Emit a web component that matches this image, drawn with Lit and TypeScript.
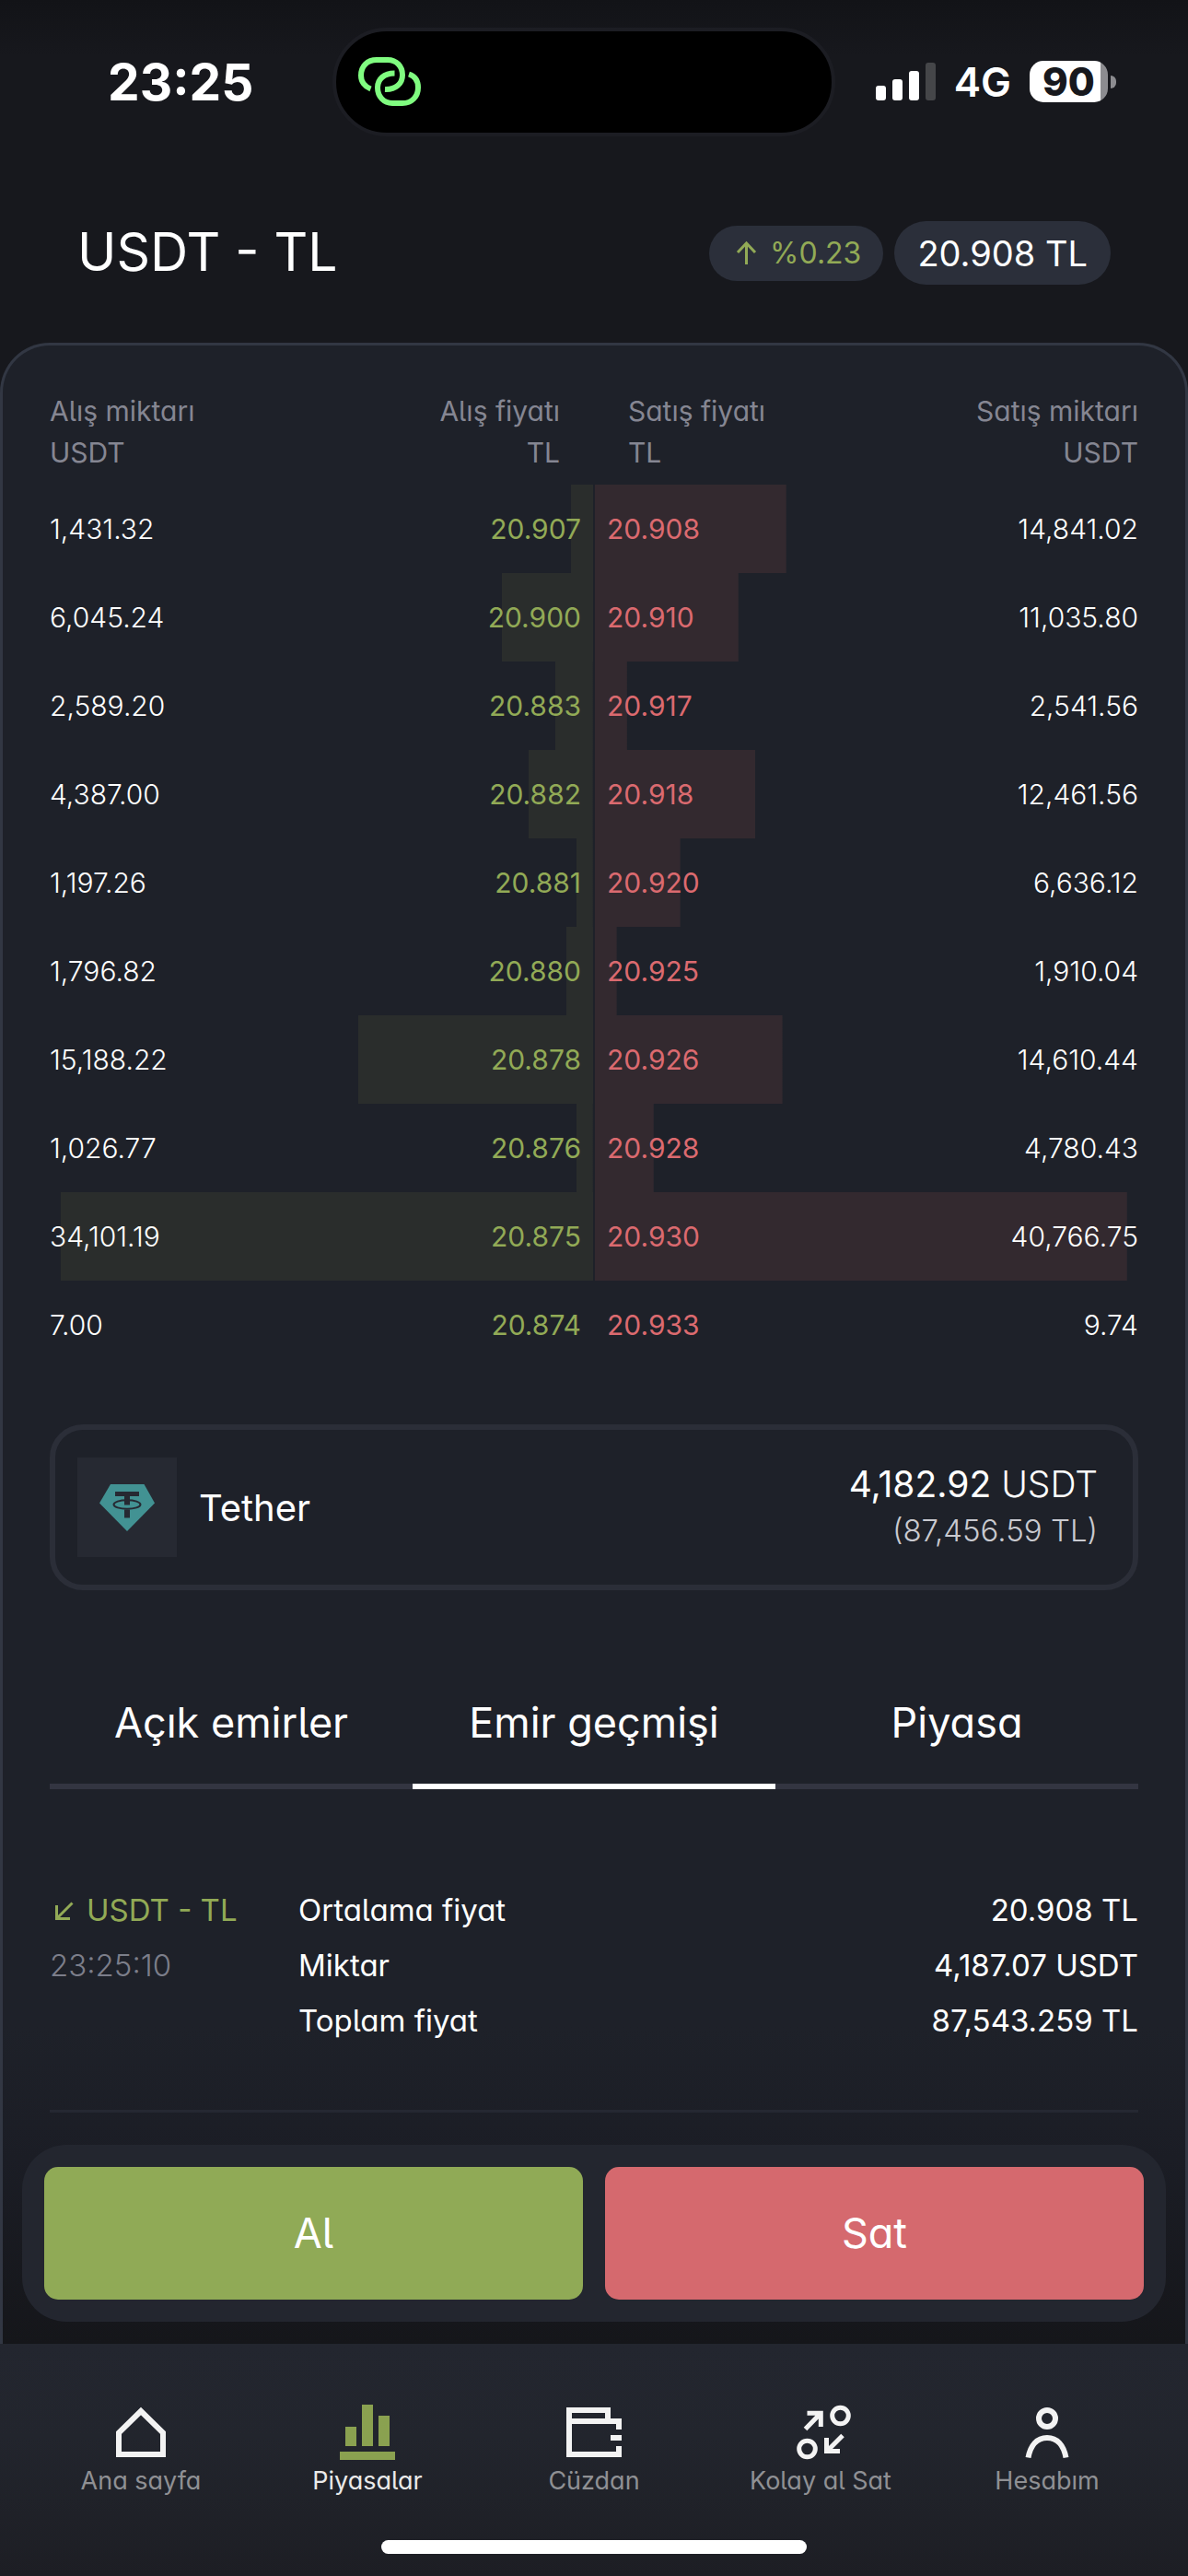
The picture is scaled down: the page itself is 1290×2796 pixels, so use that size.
import { LitElement, html, svg, css } from "lit";
import { customElement } from "lit/decorators.js";
import { classMap } from "lit/directives/class-map.js";

interface Level {
  amount: string;
  price: string;
  depth: number;
}

const bids: Level[] = [
  { amount: "1,431.32", price: "20.907", depth: 4.1 },
  { amount: "6,045.24", price: "20.900", depth: 16.8 },
  { amount: "2,589.20", price: "20.883", depth: 6.9 },
  { amount: "4,387.00", price: "20.882", depth: 11.8 },
  { amount: "1,197.26", price: "20.881", depth: 3 },
  { amount: "1,796.82", price: "20.880", depth: 4.9 },
  { amount: "15,188.22", price: "20.878", depth: 43.3 },
  { amount: "1,026.77", price: "20.876", depth: 3 },
  { amount: "34,101.19", price: "20.875", depth: 97.9 },
  { amount: "7.00", price: "20.874", depth: 0 },
];

const asks: Level[] = [
  { amount: "14,841.02", price: "20.908", depth: 35.2 },
  { amount: "11,035.80", price: "20.910", depth: 26.4 },
  { amount: "2,541.56", price: "20.917", depth: 5.9 },
  { amount: "12,461.56", price: "20.918", depth: 29.5 },
  { amount: "6,636.12", price: "20.920", depth: 15.7 },
  { amount: "1,910.04", price: "20.925", depth: 4 },
  { amount: "14,610.44", price: "20.926", depth: 34.5 },
  { amount: "4,780.43", price: "20.928", depth: 10.8 },
  { amount: "40,766.75", price: "20.930", depth: 98 },
  { amount: "9.74", price: "20.933", depth: 0 },
];

const tabs = ["Açık emirler", "Emir geçmişi", "Piyasa"];

const navItems = [
  {
    label: "Ana sayfa",
    icon: svg`<path d="M6 54V30.500L30 7L54 30.500V54Z" fill="none" stroke="#f3f3f3" stroke-width="6"/>`,
  },
  {
    label: "Piyasalar",
    icon: svg`<path d="M6 24h12v21H6zM24 0h12v45H24zM42 12h12v33H42zM0 51h60v9H0z" fill="#8aa150"/>`,
  },
  {
    label: "Cüzdan",
    icon: svg`<path d="M57 27V18H3M45 18V6H3V54H57V45M48 36H60" fill="none" stroke="#f3f3f3" stroke-width="6"/>`,
  },
  {
    label: "Kolay al Sat",
    icon: svg`<g fill="none" stroke="#f3f3f3" stroke-width="5"><circle cx="51.500" cy="12" r="8.800"/><circle cx="15.500" cy="48" r="8.800"/><path d="M13.500 26.500L30 9.500M15.500 9.200H30.300V24M54 33.500L37 50.500M36.500 36V50.500H51"/></g>`,
  },
  {
    label: "Hesabım",
    icon: svg`<g fill="none" stroke="#f3f3f3" stroke-width="6"><circle cx="30" cy="15" r="9"/><path d="M9.500 57.500C12 44 19 36 30 36S48 44 50.500 57.500"/></g>`,
  },
];

@customElement("order-book-side")
class OrderBookSide extends LitElement {
  static properties = {
    side: { type: String },
    levels: { attribute: false },
  };
  declare side: "bid" | "ask";
  declare levels: Level[];

  static styles = css`
    :host {
      display: block;
    }
    .book {
      width: 100%;
      border-collapse: collapse;
      font-size: 30px;
      line-height: 45px;
    }
    th,
    td {
      padding: 0;
      font-weight: 400;
      text-align: left;
    }
    th {
      padding-bottom: 12px;
      color: #858692;
    }
    td {
      height: 96px;
      color: #fff;
    }
    .end {
      text-align: right;
    }
    td.amount {
      font-weight: 300;
    }
    .level {
      background-repeat: no-repeat;
    }
    .bid .level {
      background-image: linear-gradient(#2a2d2c, #2a2d2c);
      background-position: right top;
    }
    .ask .level {
      background-image: linear-gradient(#33292f, #33292f);
      background-position: left top;
    }
    .bid th.price {
      padding-right: 36px;
    }
    .ask th.price {
      padding-left: 36px;
    }
    .bid td.price {
      padding-right: 13px;
      color: #92aa56;
    }
    .ask td.price {
      padding-left: 13px;
      color: #db6a6f;
    }
  `;

  render() {
    const bid = this.side === "bid";
    const amountClass = bid ? "amount" : "amount end";
    const priceClass = bid ? "price end" : "price";
    const amountHead = html`<th scope="col" class=${amountClass}>${bid ? "Alış" : "Satış"} miktarı<br />USDT</th>`;
    const priceHead = html`<th scope="col" class=${priceClass}>${bid ? "Alış" : "Satış"} fiyatı<br />TL</th>`;
    return html`
      <table class="book ${this.side}">
        <thead>
          <tr>${bid ? [amountHead, priceHead] : [priceHead, amountHead]}</tr>
        </thead>
        <tbody>
          ${this.levels.map((l) => {
            const amount = html`<td class=${amountClass}>${l.amount}</td>`;
            const price = html`<td class=${priceClass}>${l.price}</td>`;
            return html`<tr class="level" style="background-size: ${l.depth}% 100%">
              ${bid ? [amount, price] : [price, amount]}
            </tr>`;
          })}
        </tbody>
      </table>
    `;
  }
}

@customElement("app-root")
class AppRoot extends LitElement {
  static styles = css`
    :host {
      display: block;
      font-family: Inter, "Liberation Sans", sans-serif;
      font-feature-settings: "cv11", "cv05";
      color: #fff;
      background: #17181d;
    }
    * {
      box-sizing: border-box;
    }
    svg {
      display: block;
      overflow: visible;
      flex: none;
    }
    button {
      margin: 0;
      padding: 0;
      border: 0;
      background: none;
      color: inherit;
      font: inherit;
      font-feature-settings: inherit;
    }
    .screen {
      display: flex;
      flex-direction: column;
      min-height: 100vh;
      background: linear-gradient(#121317, #17181d 60px);
    }

    .status {
      display: grid;
      grid-template-columns: 361fr 546px 383fr;
      align-items: center;
      height: 177px;
      font-feature-settings: normal;
    }
    .time {
      padding-left: 117px;
      font-size: 55px;
      font-weight: 700;
    }
    .island {
      display: flex;
      align-items: center;
      height: 118px;
      padding-left: 24px;
      border: 4px solid #1c1d23;
      border-radius: 59px;
      background: #000;
    }
    .signals {
      display: flex;
      align-items: center;
      justify-content: flex-end;
      gap: 20px;
      padding-right: 78px;
      font-size: 44px;
      font-weight: 600;
    }
    .battery {
      display: flex;
      align-items: center;
      gap: 3px;
    }
    .charge {
      width: 85px;
      height: 45px;
      border-radius: 15px;
      background: linear-gradient(90deg, #fff 77px, #8c8c90 77px);
      color: #17181d;
      font-size: 42px;
      font-weight: 800;
      line-height: 45px;
      text-align: center;
    }
    .nub {
      width: 6px;
      height: 14px;
      border-radius: 0 6px 6px 0;
      background: #8c8c90;
    }

    .header {
      display: flex;
      align-items: center;
      gap: 12px;
      height: 195px;
      padding: 0 84px;
    }
    .pair {
      flex: 1;
      margin: 0;
      padding-bottom: 2px;
      font-size: 57px;
      font-weight: 400;
    }
    .pill {
      display: flex;
      align-items: center;
      justify-content: center;
      border-radius: 36px;
      background: #2b2f3a;
    }
    .change {
      gap: 15px;
      height: 60px;
      padding: 0 24px 0 30px;
      color: #92aa56;
      font-size: 32px;
    }
    .last {
      height: 69px;
      padding: 0 25px;
      font-size: 38px;
    }

    .panel {
      flex: 1;
      display: flex;
      flex-direction: column;
      padding: 49px 51px 24px;
      border: 3px solid #323743;
      border-bottom: 0;
      border-radius: 54px 54px 0 0;
      background: linear-gradient(#1e2129 calc(100% - 344px), #1b1d25 calc(100% - 200px), #15161a);
    }
    .books {
      display: grid;
      grid-template-columns: 1fr 1fr;
      gap: 2px;
    }

    .balance {
      display: flex;
      align-items: center;
      gap: 24px;
      height: 180px;
      margin-top: 60px;
      padding: 0 38px 0 24px;
      border: 6px solid #2b2e38;
      border-radius: 36px;
    }
    .coin {
      display: grid;
      place-items: center;
      width: 108px;
      height: 108px;
      background: #262932;
    }
    .coin-name {
      flex: 1;
      font-size: 40px;
      font-weight: 400;
      font-feature-settings: normal;
    }
    .holding {
      text-align: right;
      font-size: 39px;
      font-weight: 300;
      line-height: 51px;
    }
    .holding b {
      font-weight: 400;
    }
    .worth {
      color: #c9cad0;
      font-size: 33px;
    }

    .tabs {
      display: grid;
      grid-template-columns: repeat(3, 1fr);
      margin-top: 78px;
    }
    .tab {
      height: 138px;
      padding-bottom: 2px;
      border-bottom: 6px solid #333541;
      font-size: 45px;
    }
    .tab.active {
      border-color: #fff;
    }

    .order {
      display: grid;
      grid-template-columns: 270px 1fr;
      margin: 101px 0 35px;
      padding-bottom: 67px;
      border-bottom: 3px solid #252832;
      font-size: 33px;
      line-height: 60px;
    }
    .trade {
      display: flex;
      align-items: center;
      gap: 14px;
      padding-left: 6px;
      color: #92aa56;
    }
    .stamp {
      color: #7c7e8a;
      font-weight: 300;
    }
    .facts {
      margin: 0;
    }
    .fact {
      display: flex;
      justify-content: space-between;
    }
    .fact dd {
      margin: 0;
    }

    .dock {
      display: grid;
      grid-template-columns: 1fr 1fr;
      gap: 24px;
      margin: auto -30px 0;
      padding: 24px;
      border-radius: 48px;
      background: #23262f;
    }
    .trade-button {
      height: 144px;
      padding-bottom: 2px;
      border-radius: 15px;
      font-size: 45px;
    }
    .buy {
      background: #90aa56;
    }
    .sell {
      background: #d5696e;
    }

    .footer {
      padding: 66px 30px 24px;
      background: linear-gradient(#23262f, #22252d 40%, #1d1e24);
    }
    .nav {
      display: grid;
      grid-template-columns: repeat(5, 1fr);
    }
    .nav-item {
      display: flex;
      flex-direction: column;
      align-items: center;
      gap: 6px;
      color: #8f9094;
      font-size: 27px;
      line-height: 34px;
      text-decoration: none;
    }
    .nav-item.active {
      color: #eaeaea;
    }
    .home-bar {
      width: 462px;
      height: 15px;
      margin: 47px auto 0;
      border-radius: 8px;
      background: #fff;
    }
  `;

  private statusBar() {
    return html`
      <div class="status">
        <div class="time">23:25</div>
        <div class="island">
          <svg width="68" height="53" viewBox="0 0 68 53" fill="none" stroke="#80fc80" stroke-width="6">
            <path d="M13.500 34.500C7 32 3 26.500 3 20C3 9.500 10 3 20 3H32C41.500 3 48 10 48 19.500C48 28.500 41 35.500 29 35" />
            <path d="M39.500 17.500C28 17.500 21 24 21 33C21 43 28 50 37 50H48C58 50 65 43 65 33C65 26 61.500 20.500 55 18.500" />
          </svg>
        </div>
        <div class="signals">
          <svg width="65" height="41" viewBox="0 0 65 41" fill="#fff">
            <rect y="25" width="11" height="16" rx="3" />
            <rect x="18" y="18" width="11" height="23" rx="3" />
            <rect x="36" y="9" width="11" height="32" rx="3" />
            <rect x="54" width="11" height="41" rx="3" fill="#454649" />
          </svg>
          <span>4G</span>
          <div class="battery">
            <div class="charge">90</div>
            <div class="nub"></div>
          </div>
        </div>
      </div>
    `;
  }

  private balance() {
    return html`
      <section class="balance">
        <div class="coin">
          <svg width="60" height="51" viewBox="0 0 60 51">
            <path d="M12 0H48.500L60 20.500L30 51L0 20.500Z" fill="#429293" />
            <path d="M17 8H43V13H33V22.500H27V13H17ZM27 27.500H33V36.500H27Z" fill="#262932" />
            <ellipse cx="30" cy="22" rx="14.500" ry="4.800" fill="none" stroke="#262932" stroke-width="2" />
          </svg>
        </div>
        <div class="coin-name">Tether</div>
        <div class="holding">
          <div><b>4,182.92</b> USDT</div>
          <div class="worth">(87,456.59 TL)</div>
        </div>
      </section>
    `;
  }

  private order() {
    return html`
      <article class="order">
        <div>
          <div class="trade">
            <svg width="20" height="20" viewBox="0 0 20 20" fill="none" stroke="#92aa56" stroke-width="3">
              <path d="M18.500 2.500L2 19M1.500 5V19.500H16" />
            </svg>
            USDT - TL
          </div>
          <div class="stamp">23:25:10</div>
        </div>
        <dl class="facts">
          <div class="fact"><dt>Ortalama fiyat</dt><dd>20.908 TL</dd></div>
          <div class="fact"><dt>Miktar</dt><dd>4,187.07 USDT</dd></div>
          <div class="fact"><dt>Toplam fiyat</dt><dd>87,543.259 TL</dd></div>
        </dl>
      </article>
    `;
  }

  render() {
    return html`
      <div class="screen">
        ${this.statusBar()}
        <header class="header">
          <h1 class="pair">USDT - TL</h1>
          <div class="pill change">
            <svg width="21" height="25" viewBox="0 0 21 25" fill="none" stroke="#92aa56" stroke-width="3">
              <path d="M10.500 25V2.500M1 12L10.500 2L20 12" />
            </svg>
            %0.23
          </div>
          <div class="pill last">20.908 TL</div>
        </header>
        <main class="panel">
          <div class="books">
            <order-book-side side="bid" .levels=${bids}></order-book-side>
            <order-book-side side="ask" .levels=${asks}></order-book-side>
          </div>
          ${this.balance()}
          <div class="tabs" role="tablist">
            ${tabs.map(
              (t, i) => html`<button role="tab" aria-selected=${i === 1 ? "true" : "false"} class=${classMap({ tab: true, active: i === 1 })}>${t}</button>`
            )}
          </div>
          ${this.order()}
          <div class="dock">
            <button class="trade-button buy">Al</button>
            <button class="trade-button sell">Sat</button>
          </div>
        </main>
        <footer class="footer">
          <nav class="nav">
            ${navItems.map(
              (n, i) => html`<a href="#" class=${classMap({ "nav-item": true, active: i === 1 })}>
                <svg width="60" height="60" viewBox="0 0 60 60">${n.icon}</svg>
                <span>${n.label}</span>
              </a>`
            )}
          </nav>
          <div class="home-bar"></div>
        </footer>
      </div>
    `;
  }
}
